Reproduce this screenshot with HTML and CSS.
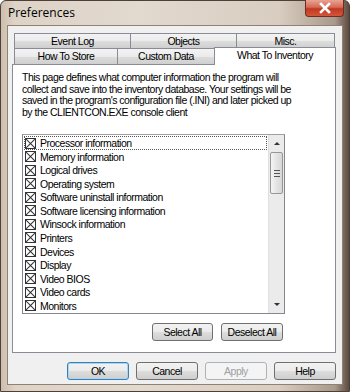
FILE: index.html
```html
<!DOCTYPE html>
<html lang="en">
<head>
    <meta charset="UTF-8">
    <title>Preferences</title>
    <link rel="stylesheet" href="styles.css">
</head>
<body>
    <div class="window">
        <div class="titlebar">
            <span class="title">Preferences</span>
            <div class="close-btn">
                <svg width="14" height="12" viewBox="0 0 14 12">
                    <path d="M3 2 L11 10 M11 2 L3 10" stroke="#fff" stroke-width="2.6" stroke-linecap="square" fill="none"/>
                </svg>
            </div>
        </div>

        <div class="client">
            <div class="tabs">
                <div class="tab-row">
                    <div class="tab" style="width: 116px">Event Log</div>
                    <div class="tab" style="width: 106px">Objects</div>
                    <div class="tab" style="width: 99px">Misc.</div>
                </div>
                <div class="tab-row">
                    <div class="tab" style="width: 103px">How To Store</div>
                    <div class="tab" style="width: 97px">Custom Data</div>
                    <div class="tab active" style="width: 122px">What To Inventory</div>
                </div>
            </div>

            <div class="panel">
                <p class="intro">
                    This page defines what computer information the program will<br>
                    collect and save into the inventory database. Your settings will be<br>
                    saved in the program's configuration file (.INI) and later picked up<br>
                    by the CLIENTCON.EXE console client
                </p>

                <div class="listbox">
                    <ul class="items">
                        <li class="focused"><span class="check"></span>Processor information</li>
                        <li><span class="check"></span>Memory information</li>
                        <li><span class="check"></span>Logical drives</li>
                        <li><span class="check"></span>Operating system</li>
                        <li><span class="check"></span>Software uninstall information</li>
                        <li><span class="check"></span>Software licensing information</li>
                        <li><span class="check"></span>Winsock information</li>
                        <li><span class="check"></span>Printers</li>
                        <li><span class="check"></span>Devices</li>
                        <li><span class="check"></span>Display</li>
                        <li><span class="check"></span>Video BIOS</li>
                        <li><span class="check"></span>Video cards</li>
                        <li><span class="check"></span>Monitors</li>
                    </ul>
                    <div class="scrollbar">
                        <div class="arrow up"></div>
                        <div class="thumb"><span class="grip"></span></div>
                        <div class="track"></div>
                        <div class="arrow down"></div>
                    </div>
                </div>

                <div class="list-buttons">
                    <button class="btn">Select All</button>
                    <button class="btn">Deselect All</button>
                </div>
            </div>

            <div class="dialog-buttons">
                <button class="btn default">OK</button>
                <button class="btn">Cancel</button>
                <button class="btn" disabled>Apply</button>
                <button class="btn">Help</button>
            </div>
        </div>
    </div>
</body>
</html>
```

FILE: styles.css
```css
* {
    box-sizing: border-box;
}

body {
    margin: 0;
    width: 350px;
    height: 392px;
    overflow: hidden;
    font-family: "Liberation Sans", Arial, sans-serif;
    font-size: 11px;
    color: #000;
}

.window {
    width: 350px;
    height: 392px;
    display: flex;
    flex-direction: column;
    background: linear-gradient(to right, #cdbfae 0%, #ddd3c7 4%, #e2d9cf 40%, #d8cdc0 80%, #a8998a 96%, #5c4a40 100%);
    border: 1px solid #4e4038;
    border-radius: 6px 6px 0 0;
}

.titlebar {
    height: 24px;
    display: flex;
    align-items: flex-start;
    justify-content: space-between;
    padding-left: 7px;
}

.title {
    font-family: "Open Sans", "Liberation Sans", sans-serif;
    font-size: 12px;
    line-height: 14px;
    margin-top: 5px;
    color: #000;
}

.close-btn {
    width: 39px;
    height: 17px;
    margin-right: 5px;
    margin-top: -1px;
    display: flex;
    align-items: center;
    justify-content: center;
    background: linear-gradient(to bottom, #e8a493 0%, #d46a55 45%, #c1381f 55%, #d4553b 100%);
    border: 1px solid #6e2c22;
    border-top: none;
    border-radius: 0 0 4px 4px;
}

.client {
    flex: 1;
    margin: 0 6px 6px 6px;
    background: #f0f0f0;
    border: 1px solid #8f8275;
    padding: 7px 6px 0 4px;
    font-size: 10.5px;
    letter-spacing: -0.5px;
}

.tabs {
    padding-left: 2px;
}

.tab-row {
    display: flex;
    height: 15px;
}

.tab-row + .tab-row {
    height: 16px;
}

.tab {
    flex-shrink: 0;
    height: 100%;
    border: 1px solid #898c95;
    border-bottom: none;
    border-right: none;
    background: linear-gradient(to bottom, #f3f3f3 0%, #ebebeb 50%, #dddddd 51%, #cfcfcf 100%);
    text-align: center;
    line-height: 14px;
    white-space: nowrap;
}

.tab-row .tab:last-child {
    border-right: 1px solid #898c95;
}

.tab.active {
    background: #fff;
    height: 18px;
    margin-top: -1px;
    position: relative;
    z-index: 1;
    line-height: 14px;
}

.panel {
    height: 289px;
    background: #fff;
    border: 1px solid #898c95;
    padding: 7px 0 0 9px;
}

.intro {
    margin: 0;
    line-height: 11.6px;
    white-space: nowrap;
    color: #000;
}

.listbox {
    display: flex;
    width: 263px;
    height: 180px;
    margin-top: 16px;
    border: 1px solid #828790;
    border-top-color: #a0a0a0;
}

.items {
    flex: 1;
    list-style: none;
    margin: 0;
    padding: 1px 1px 0 1px;
}

.items li {
    height: 13.55px;
    display: flex;
    align-items: center;
    white-space: nowrap;
}

.items li.focused {
    outline: 1px dotted #555;
    outline-offset: -1px;
}

.check {
    position: relative;
    width: 11px;
    height: 11px;
    margin: 0 4px 0 1px;
    border: 1px solid #333;
    flex-shrink: 0;
    overflow: hidden;
}

.check::before,
.check::after {
    content: "";
    position: absolute;
    left: -2px;
    top: 4px;
    width: 13px;
    height: 1px;
    background: #333;
    transform: rotate(45deg);
}

.check::after {
    transform: rotate(-45deg);
}

.scrollbar {
    width: 16px;
    display: flex;
    flex-direction: column;
    background: #ebebeb;
    border-left: 1px solid #e0e0e0;
}

.arrow {
    height: 17px;
    display: flex;
    align-items: center;
    justify-content: center;
}

.arrow::before {
    content: "";
    border-left: 3px solid transparent;
    border-right: 3px solid transparent;
}

.arrow.up::before {
    border-bottom: 3px solid #333;
}

.arrow.down::before {
    border-top: 3px solid #333;
}

.thumb {
    height: 42px;
    margin: 0 1px;
    border: 1px solid #979797;
    border-radius: 2px;
    background: linear-gradient(to right, #f5f5f5, #e4e4e4 50%, #d7d7d7);
    display: flex;
    align-items: center;
    justify-content: center;
}

.grip {
    width: 6px;
    height: 7px;
    border-top: 1px solid #555;
    border-bottom: 1px solid #555;
    position: relative;
}

.grip::before {
    content: "";
    position: absolute;
    left: 0;
    right: 0;
    top: 2px;
    border-top: 1px solid #555;
}

.track {
    flex: 1;
}

.list-buttons {
    display: flex;
    justify-content: flex-end;
    gap: 8px;
    width: 261px;
    margin-top: 9px;
}

.btn {
    height: 18px;
    width: 62px;
    padding: 0;
    font-family: "Liberation Sans", Arial, sans-serif;
    font-size: 10.5px;
    letter-spacing: -0.5px;
    color: #000;
    border: 1px solid #707070;
    border-radius: 3px;
    background: linear-gradient(to bottom, #f2f2f2 0%, #ebebeb 50%, #dddddd 51%, #cfcfcf 100%);
}

.list-buttons .btn:first-child {
    width: 61px;
}

.btn.default {
    border-color: #3c7fb1;
    box-shadow: inset 0 0 0 1px #a6d6f2;
}

.btn:disabled {
    color: #a0a0a0;
    border-color: #adb2b5;
    background: #f4f4f4;
}

.dialog-buttons {
    display: flex;
    justify-content: flex-end;
    gap: 7px;
    margin-top: 9px;
}
```
